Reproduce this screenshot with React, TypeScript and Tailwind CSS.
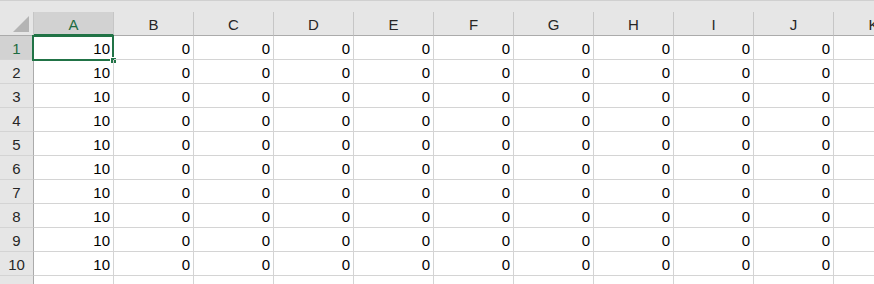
import React from 'react';

const cols = ['A', 'B', 'C', 'D', 'E', 'F', 'G', 'H', 'I', 'J', 'K'];
const rows = Array.from({ length: 11 }, (_, i) => i + 1);

function HeaderCell({ label, selected }: { label: string; selected?: boolean }) {
  return (
    <div
      className={
        selected
          ? 'h-6 flex items-center justify-center pt-[2px] border-r border-[#c6c6c6] border-b-2 border-b-[#217346] bg-[#d2d2d2] text-[#1d6b40]'
          : 'h-6 flex items-center justify-center pt-[1px] border-r border-[#c6c6c6] border-b border-b-[#ababab] text-[#262626]'
      }
    >
      {label}
    </div>
  );
}

function RowHeader({ n, selected }: { n: number; selected?: boolean }) {
  return (
    <div
      className={
        selected
          ? 'h-6 flex items-end justify-center pb-[3px] border-r border-[#ababab] border-b border-b-[#d4d4d4] bg-[#d2d2d2] text-[#1d6b40]'
          : 'h-6 flex items-end justify-center pb-[3px] border-r border-[#ababab] border-b border-b-[#d4d4d4] bg-[#e6e6e6] text-[#262626]'
      }
    >
      {n}
    </div>
  );
}

function Cell({ value, active }: { value?: number; active?: boolean }) {
  return (
    <div className="relative h-6 flex items-end justify-end pr-[3px] pb-[3px] border-r border-b border-[#d4d4d4] text-black">
      {value !== undefined && value}
      {active && (
        <div className="absolute -left-[2px] -top-[1px] -right-[1px] -bottom-[2px] border-2 border-[#217346]">
          <div className="absolute -right-[5px] -bottom-[5px] w-[7px] h-[7px] bg-[#217346] border border-white" />
        </div>
      )}
    </div>
  );
}

export default function App() {
  return (
    <div
      className="w-[874px] h-[284px] overflow-hidden bg-white text-[15px] leading-none"
      style={{ fontFamily: '"Liberation Sans", Arial, sans-serif' }}
    >
      <div className="h-3 bg-[#e6e6e6] border-t border-[#d0d0d0]" />
      <div className="grid grid-cols-[34px_repeat(11,80px)] bg-[#e6e6e6]">
        <div className="h-6 relative border-r border-[#c6c6c6] border-b border-b-[#ababab]">
          <div className="absolute right-[4px] bottom-[3px] w-0 h-0 border-l-[16px] border-l-transparent border-b-[16px] border-b-[#b4b4b4]" />
        </div>
        {cols.map((c) => (
          <HeaderCell key={c} label={c} selected={c === 'A'} />
        ))}
      </div>
      <div className="grid grid-cols-[34px_repeat(11,80px)]">
        {rows.map((r) => (
          <React.Fragment key={r}>
            <RowHeader n={r} selected={r === 1} />
            {cols.map((c, ci) => (
              <Cell
                key={c}
                active={r === 1 && ci === 0}
                value={r > 10 || ci === 10 ? undefined : ci === 0 ? 10 : 0}
              />
            ))}
          </React.Fragment>
        ))}
      </div>
    </div>
  );
}
